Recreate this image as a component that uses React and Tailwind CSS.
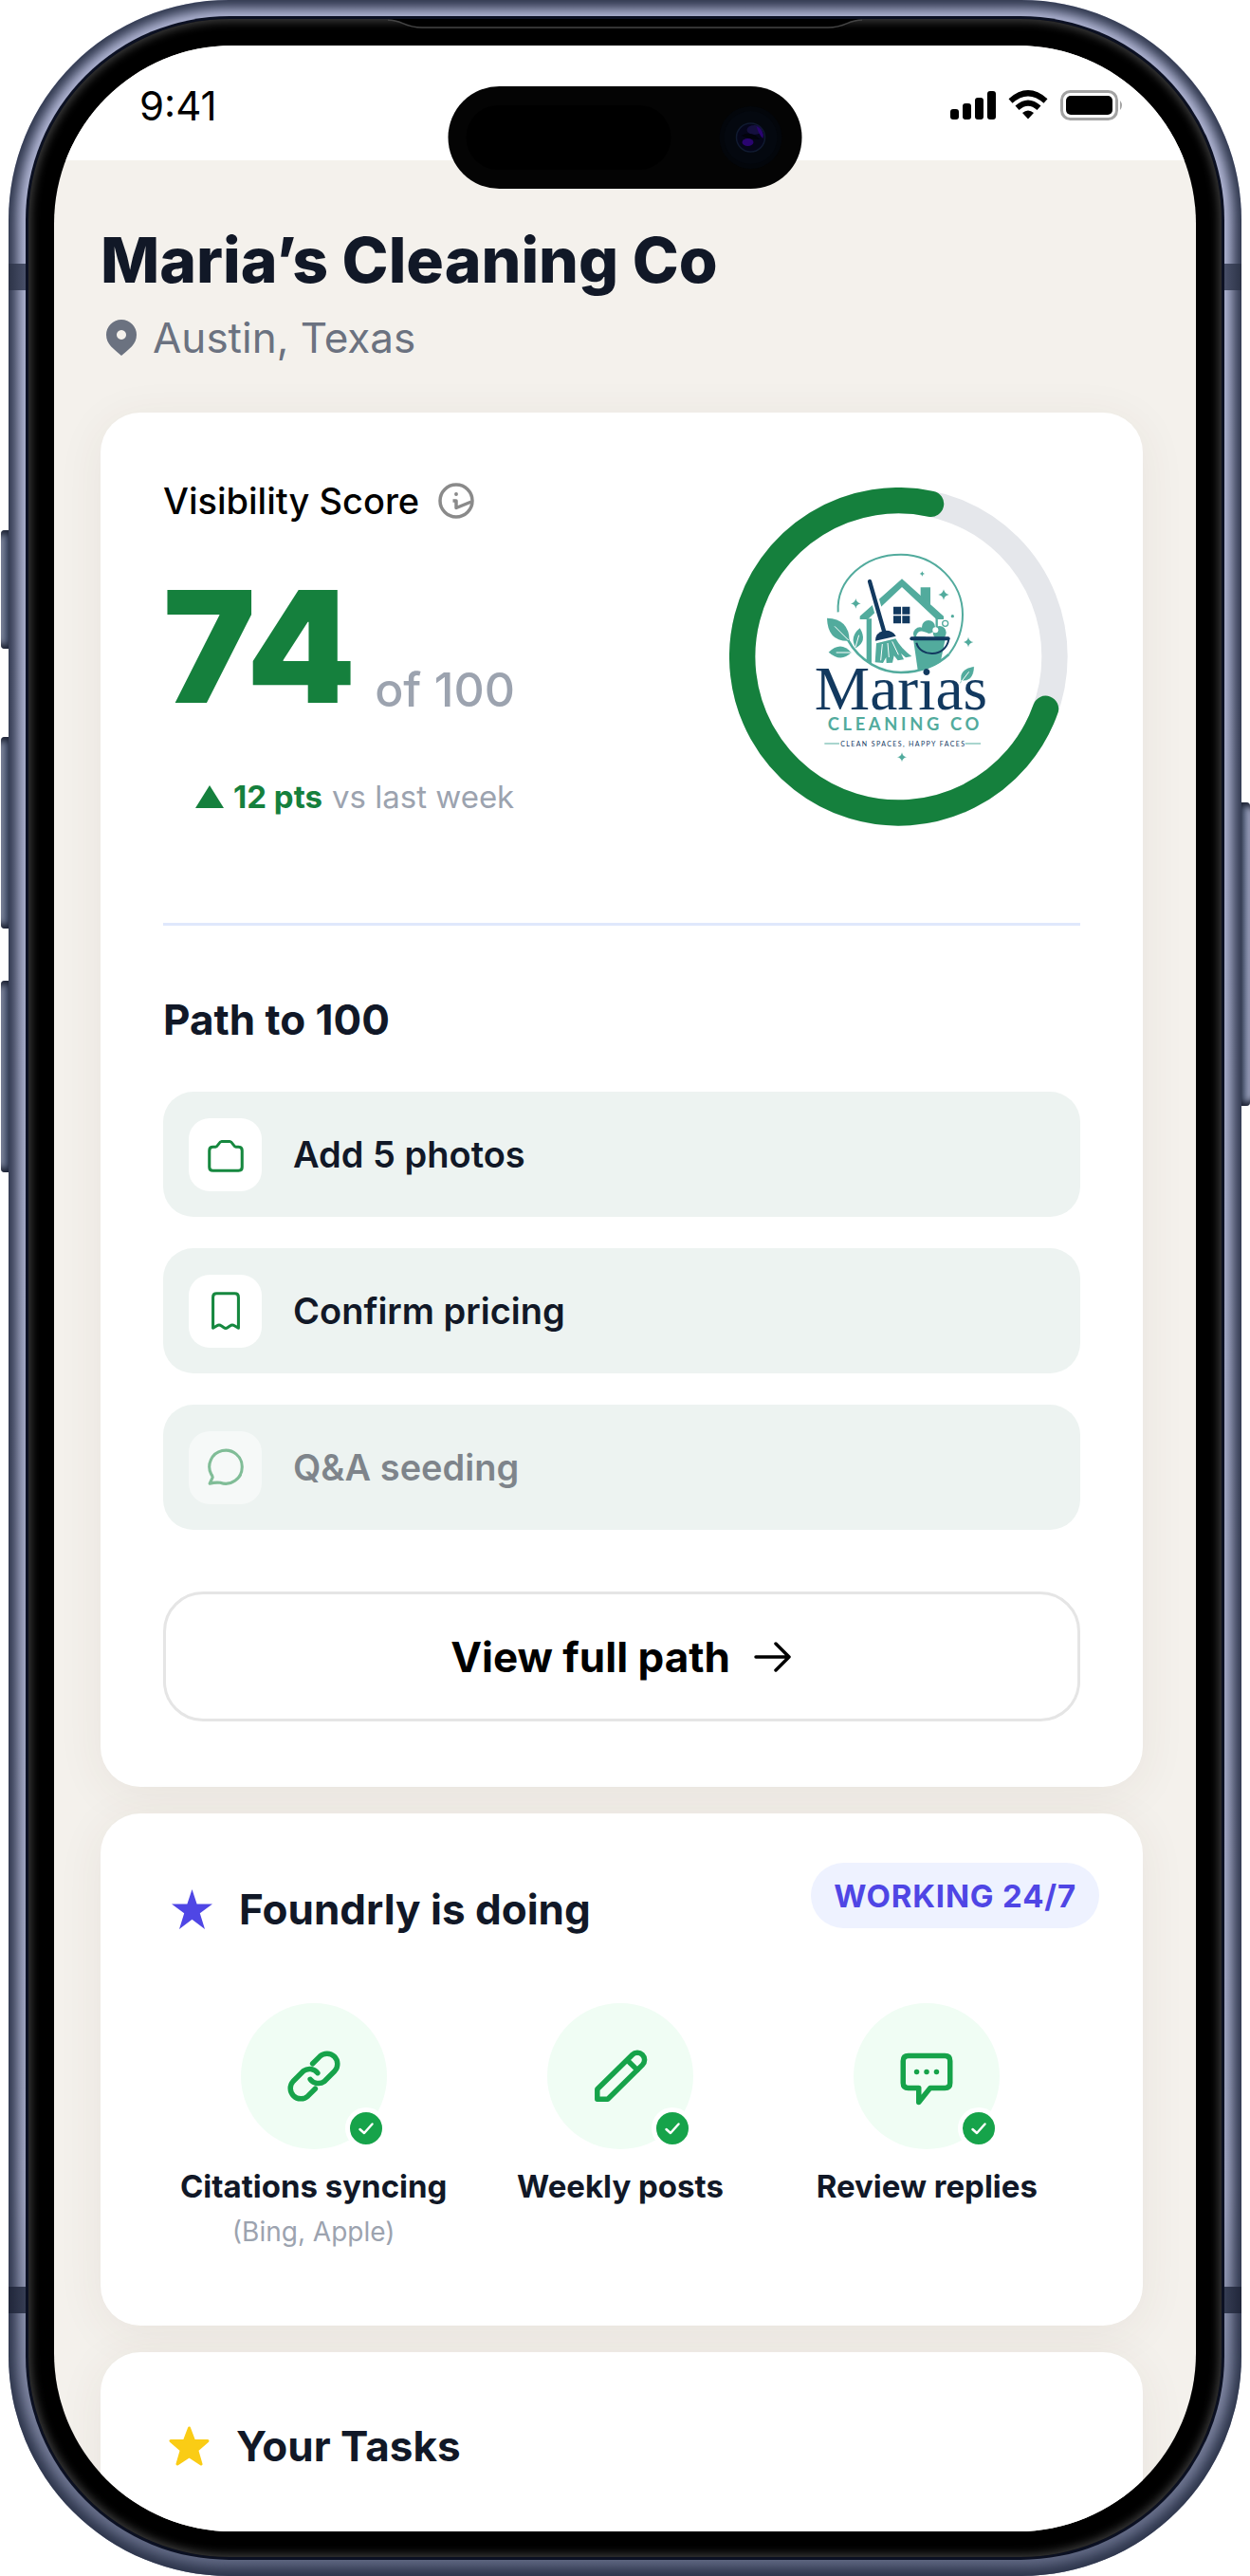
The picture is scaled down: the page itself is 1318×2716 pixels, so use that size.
const STEPS = [
  { label: "Add 5 photos", icon: "camera" },
  { label: "Confirm pricing", icon: "receipt" },
  { label: "Q&A seeding", icon: "chat", muted: true },
];

const JOBS = [
  { label: "Citations syncing", note: "(Bing, Apple)", icon: "link" },
  { label: "Weekly posts", icon: "pencil" },
  { label: "Review replies", icon: "message" },
];

const PATHS = {
  camera: (
    <path d="M5 8 H6.4 C7.7 8 8.3 5 9.7 5 H14.3 C15.7 5 16.3 8 17.6 8 H19 Q21 8 21 10 V19 Q21 21 19 21 H5 Q3 21 3 19 V10 Q3 8 5 8 Z" />
  ),
  receipt: (
    <path d="M5 21.5 V4.5 Q5 2.5 7 2.5 H17 Q19 2.5 19 4.5 V21.5 L16.800 20.200 Q15.500 19.400 14.300 20.400 L13 21.300 Q12 22 11 21.300 L9.700 20.400 Q8.500 19.400 7.200 20.200 Z" />
  ),
  chat: <path d="M21 12 A9 9 0 0 1 9 20.5 Q6 20.2 3.200 21 L4.800 17.500 Q4.600 16.600 4 15.800 A9 9 0 1 1 21 12 Z" />,
  link: (
    <>
      <path d="M11.500 7.200 L14.300 4.400 A4 4 0 0 1 20 10 L16 14 A3.900 3.900 0 0 1 10.600 13.200" />
      <path d="M12.500 16.800 L9.700 19.600 A4 4 0 0 1 4 14 L8 10 A3.900 3.900 0 0 1 13.400 10.800" />
    </>
  ),
  pencil: (
    <>
      <path d="M3.200 20.800 V17 L16.600 3.800 A2.750 2.750 0 0 1 20.500 7.700 L7.200 20.800 Z" />
      <path d="M14.800 6 L18.500 9.600" />
    </>
  ),
  message: (
    <>
      <path d="M5 16.500 H9 V22 L13.400 16.500 H19 Q21 16.500 21 14.500 V6.200 Q21 4.200 19 4.200 H5 Q3 4.200 3 6.200 V14.500 Q3 16.500 5 16.500 Z" />
      <path d="M8.200 10.400h.01M12 10.400h.01M15.800 10.400h.01" />
    </>
  ),
};

function LineIcon({ name, className, strokeWidth }) {
  return (
    <svg
      viewBox="0 0 24 24"
      className={className}
      fill="none"
      stroke="currentColor"
      strokeWidth={strokeWidth}
      strokeLinecap="round"
      strokeLinejoin="round"
      aria-hidden="true"
    >
      {PATHS[name]}
    </svg>
  );
}

function Sparkle({ x, y, r }) {
  return (
    <path
      fill="#52ab9d"
      d={`M${x} ${y - r} Q${x + r * 0.15} ${y - r * 0.15} ${x + r} ${y} Q${x + r * 0.15} ${y + r * 0.15} ${x} ${y + r} Q${x - r * 0.15} ${y + r * 0.15} ${x - r} ${y} Q${x - r * 0.15} ${y - r * 0.15} ${x} ${y - r} Z`}
    />
  );
}

function ScoreRing() {
  const r = 494;
  const at = (deg) => {
    const a = ((deg - 90) * Math.PI) / 180;
    return `${622 + r * Math.cos(a)} ${638 + r * Math.sin(a)}`;
  };
  return (
    <svg viewBox="87 103 1071 1071" className="mr-[13px] mt-[10px] w-[357px] shrink-0" role="img" aria-label="Maria's Cleaning Co, score 74 of 100">
      <circle cx="622" cy="638" r={r} fill="none" stroke="#e5e7eb" strokeWidth="82" />
      <path d={`M${at(109.5)} A${r} ${r} 0 1 1 ${at(12)}`} fill="none" stroke="#15803d" strokeWidth="82" strokeLinecap="round" />

      <path d="M431 497 C425 395 515 315 630 315 C740 315 825 405 825 505 C825 560 805 600 782 630" fill="none" stroke="#52ab9d" strokeWidth="6" />
      <path d="M462 585 C500 655 570 688 630 688 C690 688 745 665 782 630" fill="none" stroke="#52ab9d" strokeWidth="8" />

      <path d="M692 448 V419 H723 V475 Z" fill="#52ab9d" />
      <path d="M500 520 L500 510 L633 392 L765 510 L765 520 H742 L633 418 L525 520 Z" fill="#52ab9d" />
      <path d="M521 518 H537 V662 L521 655 Z" fill="#52ab9d" />
      <path d="M743 516 V545" stroke="#52ab9d" strokeWidth="7" />
      <path d="M606 480h24v24h-24z M634 480h24v24h-24z M606 509h24v24h-24z M634 509h24v24h-24z" fill="#12395f" />

      <path d="M531 400 L577 558" stroke="#fff" strokeWidth="26" />
      <path d="M531 400 L577 560" stroke="#12395f" strokeWidth="13" strokeLinecap="round" />
      <path d="M549 588 Q549 562 575 556 Q602 553 614 573 Z" fill="#12395f" />
      <path d="M552 596 L613 581 Q630 612 664 637 L645 641 L630 628 L639 647 L620 650 L608 635 L603 657 L584 658 L583 640 L573 658 L548 656 Z" fill="#52ab9d" />
      <path d="M571 598 L566 650 M588 595 L592 640 M602 590 L622 632" stroke="#fff" strokeWidth="3" />

      <path d="M669 583 H770 L755 655 Q725 676 683 680 Z" fill="#52ab9d" />
      <circle cx="690" cy="566" r="21" fill="#52ab9d" />
      <circle cx="717" cy="544" r="21" fill="#52ab9d" />
      <circle cx="752" cy="562" r="21" fill="#52ab9d" />
      <path d="M678 574 Q682 556 699 558 Q722 562 728 576 Z" fill="#fff" />
      <circle cx="739" cy="554" r="9" fill="#fff" />
      <circle cx="770" cy="533" r="9" fill="none" stroke="#52ab9d" strokeWidth="4" />
      <circle cx="793" cy="510" r="5" fill="#52ab9d" />
      <path d="M664 581 H779" stroke="#12395f" strokeWidth="12" strokeLinecap="round" />
      <path d="M679 594 C690 640 770 642 781 584" fill="none" stroke="#12395f" strokeWidth="6" />

      <path d="M396 516 Q466 518 467 588 Q398 592 396 516 Z" fill="#52ab9d" />
      <path d="M420 542 L464 586" stroke="#fff" strokeWidth="3" />
      <path d="M500 548 Q525 590 487 611 Q466 575 500 548 Z" fill="#52ab9d" />
      <path d="M497 570 L486 608" stroke="#fff" strokeWidth="3" />
      <path d="M401 624 Q440 586 473 625 Q440 658 401 624 Z" fill="#52ab9d" />
      <path d="M425 625 H472" stroke="#fff" strokeWidth="3" />

      <Sparkle x={697} y={376} r={8} />
      <Sparkle x={765} y={442} r={17} />
      <Sparkle x={487} y={470} r={16} />
      <Sparkle x={843} y={592} r={16} />
      <Sparkle x={633} y={956} r={15} />

      <text x="630" y="806" textAnchor="middle" fontSize="197" fill="#12395f" fontFamily="'Liberation Serif', serif">
        Marias
      </text>
      <path d="M860 671 Q858 718 821 712 Q816 678 860 671 Z M817 722 L826 706" fill="#52ab9d" stroke="#52ab9d" strokeWidth="2" />
      <path d="M845 686 L822 716" stroke="#fff" strokeWidth="3" />
      <text x="643" y="872" textAnchor="middle" fontSize="55" fontWeight="700" fill="#52ab9d" fontFamily="Lato, sans-serif" className="tracking-[0.2em]">
        CLEANING CO
      </text>
      <text x="637" y="921" textAnchor="middle" fontSize="21" fontWeight="400" fill="#12395f" fontFamily="Lato, sans-serif" className="tracking-[0.2em]">
        CLEAN SPACES, HAPPY FACES
      </text>
      <path d="M388 913 H435 M833 913 H882" stroke="#52ab9d" strokeWidth="3" />
    </svg>
  );
}

function StatusBar() {
  return (
    <div className="flex h-[121px] items-start justify-between bg-white pl-[90px] pr-[76px] pt-[38px]">
      <time className="text-[42px] leading-[52px] text-black">9:41</time>
      <div className="flex items-center gap-[13px] pt-[9px] text-black">
        <svg viewBox="0 0 48 32" className="w-[48px]" fill="currentColor" aria-label="Signal">
          <rect x="0" y="20" width="9" height="11" rx="3" />
          <rect x="13" y="14" width="9" height="17" rx="3" />
          <rect x="26" y="8" width="9" height="23" rx="3" />
          <rect x="39" y="1" width="9" height="30" rx="3" />
        </svg>
        <svg viewBox="0 0 42 32" className="w-[42px]" fill="none" stroke="currentColor" strokeWidth="6" aria-label="Wi-Fi">
          <path d="M2.5 11.5 Q21 -5 39.5 11.5" />
          <path d="M9.5 18.8 Q21 8.5 32.5 18.8" />
          <path d="M15 24 Q21 19 27 24 L21 30.500 Z" fill="currentColor" stroke="none" />
        </svg>
        <svg viewBox="0 0 67 32" className="w-[67px]" aria-label="Battery">
          <rect x="1.500" y="1.500" width="58" height="29" rx="9" fill="none" stroke="#a3a3a3" strokeWidth="3" />
          <rect x="6" y="6" width="49" height="20" rx="5" fill="currentColor" />
          <path d="M63 11 Q67 16 63 21 Z" fill="#a3a3a3" />
        </svg>
      </div>
    </div>
  );
}

function VisibilityCard() {
  return (
    <section className="rounded-[42px] bg-white px-[66px] pb-[69px] pt-[69px] shadow-[0_8px_50px_rgba(80,60,40,0.07)]">
      <div className="flex items-start justify-between">
        <div>
          <div className="flex items-center gap-[20px]">
            <h2 className="text-[38px] font-medium leading-[48px] text-black">Visibility Score</h2>
            <button type="button" aria-label="About the visibility score" className="text-[#8a8a8a]">
              <svg viewBox="0 0 38 38" className="w-[38px]" fill="none" stroke="currentColor" strokeWidth="3.500" strokeLinejoin="round">
                <circle cx="19" cy="19" r="17" />
                <path d="M15.500 19 H19 V26.500 L35 20" />
                <circle cx="19" cy="12" r="1.200" fill="currentColor" strokeWidth="1.500" />
              </svg>
            </button>
          </div>
          <p className="mt-[48px] flex items-end gap-[20px]">
            <span className="text-[164px] font-black leading-none text-[#15803d]">74</span>
            <span className="text-[50px] font-medium leading-[74px] text-[#9ca3af]">of 100</span>
          </p>
          <p className="mt-[56px] flex items-center pl-[34px] text-[33px] leading-[40px]">
            <svg viewBox="0 0 30 24" className="mr-[10px] w-[30px]" fill="#15803d" aria-hidden="true">
              <path d="M15 0 L30 24 H0 Z" />
            </svg>
            <span className="font-bold text-[#15803d]">12 pts</span>
            <span className="ml-[10px] text-[#9ca3af]">vs last week</span>
          </p>
        </div>
        <ScoreRing />
      </div>

      <hr className="mt-[102px] border-t-[3px] border-[#dfe8fc]" />

      <h3 className="mt-[73px] text-[44px] font-bold leading-[52px] text-[#111827]">Path to 100</h3>
      <ul className="mt-[50px] flex flex-col gap-[33px]">
        {STEPS.map((s) => (
          <li key={s.label} className="flex h-[132px] items-center rounded-[32px] bg-[#edf3f1] px-[27px]">
            <div className={s.muted ? "flex items-center gap-[33px] opacity-50" : "flex items-center gap-[33px]"}>
              <span className="flex size-[77px] items-center justify-center rounded-[22px] bg-white text-[#16883f]">
                <LineIcon name={s.icon} className="size-[46px]" strokeWidth={1.6} />
              </span>
              <span className="text-[38px] font-semibold leading-[48px] text-[#111827]">{s.label}</span>
            </div>
          </li>
        ))}
      </ul>

      <button
        type="button"
        className="mt-[65px] flex h-[137px] w-full items-center justify-center gap-[24px] rounded-[42px] border-[3px] border-neutral-200 text-[44px] font-bold leading-[52px] text-black"
      >
        View full path
        <svg viewBox="0 0 42 32" className="w-[42px]" fill="none" stroke="currentColor" strokeWidth="3.500" strokeLinecap="round" strokeLinejoin="round" aria-hidden="true">
          <path d="M3 16 H38 M24 2 L38 16 L24 30" />
        </svg>
      </button>
    </section>
  );
}

function DoingCard() {
  return (
    <section className="mt-[28px] rounded-[42px] bg-white pb-[81px] pt-[52px] shadow-[0_8px_50px_rgba(80,60,40,0.07)]">
      <div className="flex items-start justify-between pl-[75px] pr-[46px]">
        <h2 className="mt-[23px] flex items-center gap-[28px] text-[44px] font-bold leading-[52px] text-[#111827]">
          <svg viewBox="0 0 43 42" className="w-[43px]" fill="#4f46e5" aria-hidden="true">
            <path d="M21.500 0 L26.600 15.500 H43 L29.800 25.300 L35 42 L21.500 31.800 L8 42 L13.200 25.300 L0 15.500 H16.400 Z" />
          </svg>
          Foundrly is doing
        </h2>
        <span className="flex h-[69px] items-center rounded-full bg-[#eef2ff] px-[24px] text-[33px] font-bold leading-[40px] tracking-wide text-[#4f46e5]">
          WORKING 24/7
        </span>
      </div>
      <ul className="mt-[73px] grid grid-cols-3 pl-[63px] pr-[66px]">
        {JOBS.map((j) => (
          <li key={j.label} className="flex flex-col items-center">
            <div className="relative flex size-[154px] items-center justify-center rounded-full bg-[#f0fdf4] text-[#16a34a]">
              <LineIcon name={j.icon} className="size-[66px]" strokeWidth={2} />
              <span className="absolute bottom-0 right-0 flex size-[44px] items-center justify-center rounded-full border-[5px] border-white bg-[#16a34a] text-white">
                <svg viewBox="0 0 20 20" className="size-[20px]" fill="none" stroke="currentColor" strokeWidth="2.500" strokeLinecap="round" strokeLinejoin="round" aria-label="Done">
                  <path d="M3.500 11 L8 15 L16.500 5.500" />
                </svg>
              </span>
            </div>
            <p className="mt-[19px] whitespace-nowrap text-[33px] font-bold leading-[40px] text-[#111827]">{j.label}</p>
            {j.note && <p className="mt-[10px] text-[28px] leading-[36px] text-[#9ca3af]">{j.note}</p>}
          </li>
        ))}
      </ul>
    </section>
  );
}

function TasksCard() {
  return (
    <section className="mt-[28px] rounded-t-[42px] bg-white pb-[64px] pl-[72px] pt-[73px] shadow-[0_8px_50px_rgba(80,60,40,0.07)]">
      <h2 className="flex items-center gap-[28px] text-[44px] font-bold leading-[52px] text-[#111827]">
        <svg viewBox="0 0 43 42" className="w-[43px]" fill="#facc15" stroke="#facc15" strokeWidth="3" strokeLinejoin="round" aria-hidden="true">
          <path d="M21.500 2 L26.600 15.500 H41 L29.800 25.300 L34 40 L21.500 31.800 L9 40 L13.200 25.300 L2 15.500 H16.400 Z" />
        </svg>
        Your Tasks
      </h2>
    </section>
  );
}

function Island() {
  return (
    <div className="absolute left-1/2 top-[91px] flex h-[108px] w-[373px] -translate-x-1/2 items-center justify-between rounded-full bg-[#040404] pl-[19px] pr-[20px]">
      <div className="h-[68px] w-[216px] rounded-full bg-black" />
      <svg viewBox="0 0 68 68" className="w-[68px]" aria-hidden="true">
        <circle cx="34" cy="34" r="33" fill="#03060b" />
        <circle cx="34" cy="34" r="28" fill="#04080f" />
        <circle cx="34" cy="34" r="15" fill="#05061a" stroke="#101a30" strokeWidth="1.500" />
        <ellipse cx="38" cy="26" rx="8" ry="5" fill="#15103f" />
        <path d="M40 22 Q49 26 47 35 Q43 32 40 22 Z" fill="#2a0470" />
        <ellipse cx="31" cy="39" rx="6" ry="4" fill="#2a0470" />
        <path d="M24 32 Q34 26 44 36 Q34 36 24 32 Z" fill="#02030c" />
      </svg>
    </div>
  );
}

export default function App() {
  return (
    <div className="min-h-screen bg-white font-['Inter',sans-serif] antialiased">
      <div className="relative px-[9px]">
        <div className="absolute left-px top-[559px] h-[125px] w-[12px] rounded-l-[4px] bg-linear-to-r from-[#8b93a8] via-[#4a546e] to-[#1f2638] shadow-[inset_0_8px_6px_-4px_#1c2233,inset_0_-8px_6px_-4px_#1c2233]" />
        <div className="absolute left-px top-[777px] h-[202px] w-[12px] rounded-l-[4px] bg-linear-to-r from-[#8b93a8] via-[#4a546e] to-[#1f2638] shadow-[inset_0_8px_6px_-4px_#1c2233,inset_0_-8px_6px_-4px_#1c2233]" />
        <div className="absolute left-px top-[1034px] h-[202px] w-[12px] rounded-l-[4px] bg-linear-to-r from-[#8b93a8] via-[#4a546e] to-[#1f2638] shadow-[inset_0_8px_6px_-4px_#1c2233,inset_0_-8px_6px_-4px_#1c2233]" />
        <div className="absolute right-0 top-[846px] h-[320px] w-[12px] rounded-r-[4px] bg-linear-to-l from-[#a9aecb] via-[#5c6680] to-[#1f2638] shadow-[inset_0_8px_6px_-4px_#1c2233,inset_0_-8px_6px_-4px_#1c2233]" />

        <div className="relative rounded-[232px] bg-linear-to-b from-[#b4b9d8] via-[#a6abc8] via-85% to-[#5f6782] px-[21px] py-[20px] shadow-[inset_0_0_13px_9px_#2c344a]">
          <div className="absolute left-0 top-[278px] h-[28px] w-[21px] bg-linear-to-r from-[#2c3347] to-[#4e556f]" />
          <div className="absolute right-0 top-[278px] h-[28px] w-[21px] bg-linear-to-l from-[#2c3347] to-[#4e556f]" />
          <div className="absolute bottom-[277px] left-0 h-[28px] w-[21px] bg-linear-to-r from-[#20263a] to-[#3a4158]" />
          <div className="absolute bottom-[277px] right-0 h-[28px] w-[21px] bg-linear-to-l from-[#20263a] to-[#3a4158]" />

          <div className="relative rounded-[212px] bg-black px-[27px] pb-[27px] pt-[28px] shadow-[0_0_0_3px_#0b1022,inset_0_0_10px_3px_#3c3c3c]">
            <svg viewBox="0 0 500 14" className="absolute left-1/2 top-0 w-[500px] -translate-x-1/2" aria-hidden="true">
              <path d="M0 0 H500 V1 C484 1 484 9 464 9 H36 C16 9 16 1 0 1 Z" fill="#000" />
              <path d="M0 1 C16 1 16 9 36 9 H464 C484 9 484 1 500 1" fill="none" stroke="#444" strokeWidth="1.500" />
            </svg>
            <main className="overflow-hidden rounded-[188px] bg-[#f4f1ec]">
              <StatusBar />
              <div className="pl-[49px] pr-[56px]">
                <header className="pb-[53px] pt-[65px]">
                  <h1 className="text-[66px] font-extrabold leading-[80px] text-[#111827]">Maria’s Cleaning Co</h1>
                  <p className="mt-[16px] flex items-center gap-[17px] pl-[6px] text-[44px] leading-[52px] text-[#6b7280]">
                    <svg viewBox="0 0 32 38" className="w-[32px]" fill="currentColor" aria-hidden="true">
                      <path fillRule="evenodd" d="M16 0 A16 16 0 0 1 32 16 C32 26 24 31 16 38 C8 31 0 26 0 16 A16 16 0 0 1 16 0 Z M16 11 a5 5 0 1 0 0.010 0 Z" />
                    </svg>
                    Austin, Texas
                  </p>
                </header>
                <VisibilityCard />
                <DoingCard />
                <TasksCard />
              </div>
            </main>
          </div>
          <Island />
        </div>
      </div>
    </div>
  );
}
